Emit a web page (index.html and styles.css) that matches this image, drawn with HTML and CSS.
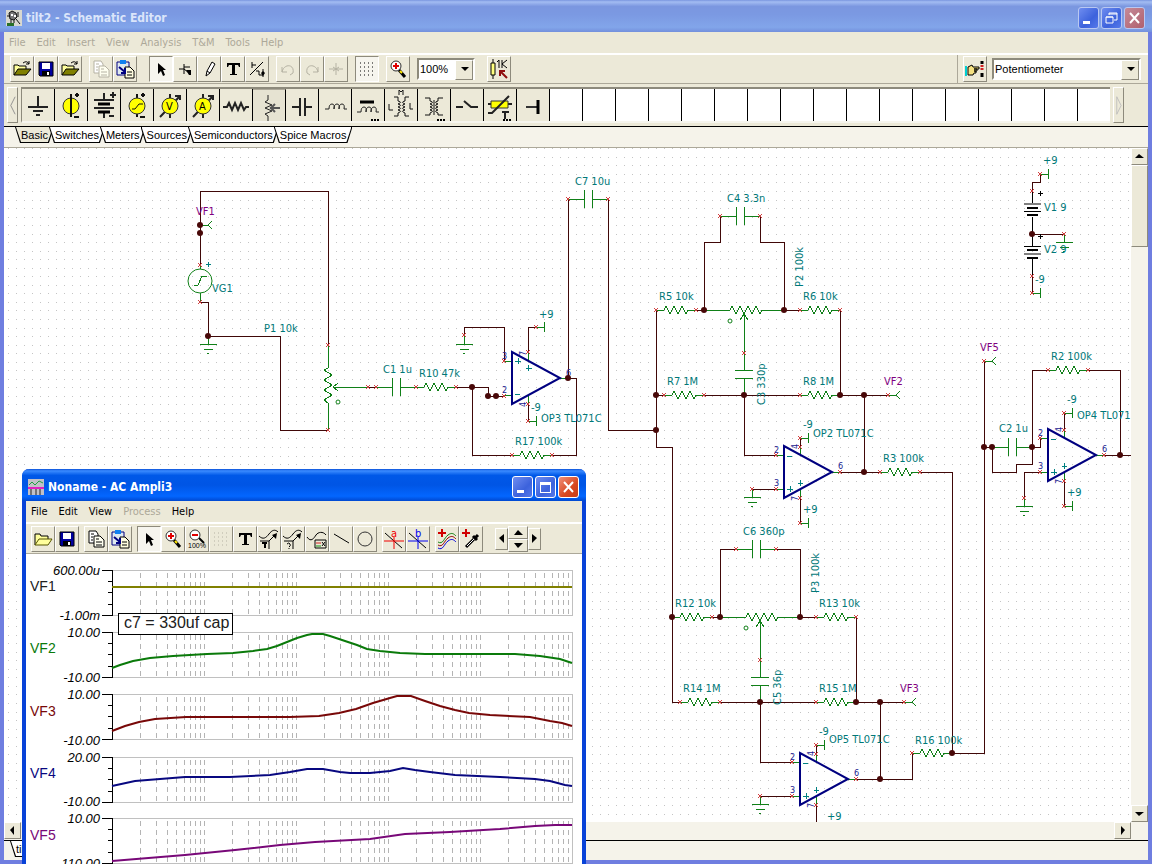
FILE: index.html
```
<!DOCTYPE html>
<html lang="en">
<head>
  <meta charset="UTF-8">
  <meta name="viewport" content="width=device-width, initial-scale=1.0">
  <title>tilt2 - Schematic Editor</title>
  <link rel="stylesheet" href="styles.css">
</head>
<body>
  <!-- shared icons and schematic symbols -->
  <svg class="defs" aria-hidden="true">
    <defs>
      <symbol id="i-open" viewBox="0 0 20 20">
        <path d="M2 16V6h4l1 1h7v3" fill="#ffff9c" stroke="#000"/>
        <path d="M2 16l4-6h13l-5 6z" fill="#808000" stroke="#000"/>
        <path d="M11 4q4-3 6 1m0-3v3h-3" fill="none" stroke="#000"/>
      </symbol>
      <symbol id="i-open-light" viewBox="0 0 20 20">
        <path d="M2 16V5h5l1 2h7v3" fill="#ffff9c" stroke="#000"/>
        <path d="M2 16l4-6h13l-4 6z" fill="#ffff9c" stroke="#555500"/>
      </symbol>
      <symbol id="i-save" viewBox="0 0 20 20">
        <path d="M3 3h14v14H4l-1-1z" fill="#0000a0" stroke="#000"/>
        <path d="M6 4h8v6H6z" fill="#fff"/>
        <path d="M6 12h8v5H6z" fill="#000"/><path d="M11 13h2v3h-2z" fill="#fff"/>
      </symbol>
      <symbol id="i-copy" viewBox="0 0 20 20">
        <path d="M3 2h7l2 3v9H3z" fill="#fff" stroke="currentColor"/>
        <path d="M8 7h6l4 4v7H8z" fill="#fffff0" stroke="currentColor"/>
        <path d="M5 5h3M5 8h2M5 11h2M10 10h3M10 13h6M10 16h6" stroke="currentColor"/>
      </symbol>
      <symbol id="i-paste" viewBox="0 0 20 20">
        <path d="M2 3h12v13H2z" fill="#dfe9f0" stroke="#000080"/>
        <path d="M5 1h6v4H5z" fill="#1080f0"/>
        <path d="M10 8h5l4 4v7h-9z" fill="#fffde0" stroke="#000"/>
        <path d="M12 13h5M12 16h5" stroke="#000"/>
        <path d="M4 8l6 5M10 9v5H6" fill="none" stroke="#000080" stroke-width="2"/>
      </symbol>
      <symbol id="i-cursor" viewBox="0 0 20 20"><path d="M7 4v11l3-3 2 5 2-1-2-5h3z"/></symbol>
      <symbol id="i-zoomin" viewBox="0 0 20 20">
        <path d="M11 11l6 7" stroke="#000" stroke-width="3"/><path d="M12 12l2 2" stroke="#ffe800" stroke-width="2"/>
        <circle cx="8" cy="7" r="5" fill="#fff" stroke="#303030"/><path d="M5 7h6M8 4v6" stroke="#e00000" stroke-width="2"/>
      </symbol>
      <symbol id="i-zoomout" viewBox="0 0 20 20">
        <path d="M11 8l6 6" stroke="#000" stroke-width="2"/>
        <circle cx="8" cy="6" r="5" fill="#fff" stroke="#303030"/><path d="M5 6h6" stroke="#e00000" stroke-width="2"/>
        <text class="tiny" x="1" y="19">100%</text>
      </symbol>
      <symbol id="i-grid" viewBox="0 0 20 20">
        <path d="M3 4h16M3 8h16M3 12h16M3 16h16" stroke="currentColor" stroke-dasharray="1 3"/>
      </symbol>
      <symbol id="i-text" viewBox="0 0 20 20">
        <path d="M4 4h13v4h-1l-1-2h-3v9h2v1H7v-1h2V6H6L5 8H4z"/>
      </symbol>
      <symbol id="i-curve" viewBox="0 0 20 20">
        <path d="M0 7c4 4 7 2 10-2s6-5 9-2M1 12h9v8" fill="none" stroke="#000"/>
        <path d="M10 12l6-6" stroke="#000"/><path d="M18 4l-1 6-4-4z"/>
      </symbol>

      <g id="resistor"><path d="M0 0h8l2-4 4 8 4-8 4 8 4-8 4 8 2-4h8"/></g>
      <g id="cap"><path d="M0 0h16M16-9v18M24-9v18M24 0h16"/></g>
      <g id="hpot"><path d="M0 0h26l2-4 4 8 4-8 4 8 4-8 4 8 4-8 4 8 2-4h22M40 5v38M36 10l4-6 4 6"/></g>
      <g id="ground"><path d="M0 0v8M-8 8H9M-4 13H5M-1 17h2"/></g>
      <g id="probe"><path d="M0 0h8M12-4l-4 4 4 4"/></g>
      <g id="rail"><path d="M0 0h8M8-5v10"/></g>
      <g id="opamp">
        <path class="part" d="M-8-17h8M-8 17h8M48 0h8M16-26v9M16 17v9"/>
        <path class="amp" d="M0-26v52L48 0z"/>
      </g>
      <!-- inverting input on top -->
      <g id="opamp-inv">
        <use href="#opamp"/>
        <path class="sign" d="M3-16h5M3 17h6M6 14v6M14 11h5M16 8v6"/>
        <text class="pin" x="-10" y="-19">2</text><text class="pin" x="-10" y="14">3</text>
        <text class="pin" x="54" y="-3">6</text>
        <text class="pin" transform="translate(14 -23) rotate(-90)">4</text>
        <text class="pin" transform="translate(14 29) rotate(-90)">7</text>
      </g>
      <marker id="m-pin" markerUnits="userSpaceOnUse" markerWidth="6" markerHeight="6" refX="3" refY="3">
        <path d="M1 1l4 4M5 1L1 5" stroke="#d04040"/>
      </marker>
      <marker id="m-node" markerUnits="userSpaceOnUse" markerWidth="8" markerHeight="8" refX="4" refY="4">
        <circle cx="4" cy="4" r="3" fill="#480808"/>
      </marker>
      <pattern id="dots" width="8" height="128" y="63" patternUnits="userSpaceOnUse">
        <path d="M0 0h1v1H0zM0 9h1v1H0zM0 17h1v1H0zM0 26h1v1H0zM0 34h1v1H0zM0 43h1v1H0zM0 51h1v1H0zM0 60h1v1H0zM0 68h1v1H0zM0 77h1v1H0zM0 85h1v1H0zM0 94h1v1H0zM0 102h1v1H0zM0 111h1v1H0zM0 119h1v1H0z" fill="#c4c4c4"/>
      </pattern>

      <path id="decade" d="M28 3v42M44 3v42M55 3v42M64 3v42M72 3v42M78 3v42M83 3v42M88 3v42M92 3v42"/>
      <g id="plot">
        <g class="log"><use href="#decade"/><use href="#decade" x="92"/><use href="#decade" x="184"/><use href="#decade" x="276"/><use href="#decade" x="368"/></g>
        <path class="plot-box" d="M0 0h460v45H0"/>
        <path class="axis" d="M-10 0H0v45h-10M-4 11h4M-4 22h4M-4 34h4"/>
      </g>
    </defs>
  </svg>

  <div class="window">
    <header class="titlebar">
      <svg class="app-icon" viewBox="0 0 16 16"><path d="M0 0h16v16H0z" fill="#d8d8d0"/><path d="M3 3l3-2 4 2 1 4-3 3-4-1zM10 9l4 5M5 10v3M8 10v3M12 2v5M1 6h3" stroke="#111" fill="#777"/><path d="M1 13h7v3H1z" fill="#287028"/><path d="M5 4h2v2H5zM8 5h2v2H8z" fill="#fff"/></svg>
      <h1>tilt2 - Schematic Editor</h1>
      <div class="caption">
        <button aria-label="Minimize"><svg viewBox="0 0 19 19"><path d="M4 12h7v3H4z" fill="#fff"/></svg></button>
        <button aria-label="Restore"><svg viewBox="0 0 19 19"><path d="M7 6V4h8v7h-3M4 8h7v6H4zM4 8h7M7 5h8" fill="none" stroke="#fff"/></svg></button>
        <button class="close" aria-label="Close"><svg viewBox="0 0 19 19"><path d="M5 4l9 10M14 4L5 14" stroke="#fff" stroke-width="2"/></svg></button>
      </div>
    </header>

    <nav class="menu inactive">
      <button>File</button><button>Edit</button><button>Insert</button><button>View</button><button>Analysis</button><button>T&amp;M</button><button>Tools</button><button>Help</button>
    </nav>

    <div class="toolbar">
      <div class="group">
        <button aria-label="Open"><svg><use href="#i-open"/></svg></button>
        <button aria-label="Save"><svg><use href="#i-save"/></svg></button>
        <button aria-label="Close file"><svg><use href="#i-open"/></svg></button>
      </div>
      <div class="group">
        <button aria-label="Copy" class="dim"><svg><use href="#i-copy"/></svg></button>
        <button aria-label="Paste"><svg><use href="#i-paste"/></svg></button>
      </div>
      <div class="group wide">
        <button aria-label="Select" class="pressed"><svg><use href="#i-cursor"/></svg></button>
        <button aria-label="Last component"><svg viewBox="0 0 20 20"><path d="M4 10h5M9 5v10M9 8h6M9 10l5 4" fill="none" stroke="#000"/><path d="M11 11h5v5h-2z"/></svg></button>
        <button aria-label="Wire"><svg viewBox="0 0 20 20"><path d="M8 12l5-9 3 2-5 9-4 3zM8 12l3 2" fill="#fff" stroke="#000"/></svg></button>
        <button aria-label="Text"><svg><use href="#i-text"/></svg></button>
        <button aria-label="Hide or reconnect"><svg viewBox="0 0 20 20"><path d="M5 3v6M5 6h4M3 16L16 3M9 12h3v4h4M16 10v8" fill="none" stroke="#000"/><path d="M16 12l2 2-2 3-2-3z"/></svg></button>
      </div>
      <div class="group">
        <button aria-label="Undo" class="dim"><svg viewBox="0 0 20 20"><path d="M4 8v5h5M4 13C6 4 17 5 15 14l-3 2" fill="none" stroke="currentColor"/></svg></button>
        <button aria-label="Redo" class="dim"><svg viewBox="0 0 20 20"><path d="M16 8v5h-5M16 13C14 4 3 5 5 14l3 2" fill="none" stroke="currentColor"/></svg></button>
        <button aria-label="Delete" class="dim"><svg viewBox="0 0 20 20"><path d="M3 10h14M10 4v12M7 8l6 4M13 8l-6 4" stroke="currentColor"/></svg></button>
      </div>
      <div class="group">
        <button aria-label="Grid" class="pressed"><svg><use href="#i-grid"/></svg></button>
      </div>
      <div class="group">
        <button aria-label="Zoom"><svg><use href="#i-zoomin"/></svg></button>
      </div>
      <div class="combo zoom"><select aria-label="Zoom level"><option>100%</option></select></div>
      <div class="group wide">
        <button aria-label="Edit value"><svg viewBox="0 0 20 20"><path d="M4 0v20" stroke="#000"/><path d="M2 4h4v12H2z" fill="#ffff80" stroke="#000"/><path d="M18 19l-6-6M11 17v-5h5" fill="none" stroke="#901010" stroke-width="2"/><path d="M8 3l2-2v8M13 1v8M18 1l-5 4 5 4" fill="none" stroke="#000"/></svg></button>
      </div>
      <div class="finder">
        <button aria-label="Find component"><svg viewBox="0 0 20 20"><path d="M1 7v10" stroke="#00d0d0" stroke-width="2"/><path d="M3 8l4-2 1 2h6v2H9h3v2H9h2v2H9l-1 2H3z" fill="#f4e080" stroke="#000"/><path d="M17 2v3M17 14v4" stroke="#000" stroke-width="3"/><path d="M17 6v6" stroke="#d02020" stroke-width="3" stroke-dasharray="2 1"/></svg></button>
        <div class="combo part-name"><select aria-label="Component"><option>Potentiometer</option></select></div>
      </div>
    </div>

    <div class="palette-row">
      <button class="scroll-cap" aria-label="Scroll left"><svg viewBox="0 0 8 24"><path d="M7 2L2 12l5 10" fill="none" stroke="#888"/></svg></button>
      <div class="palette">
        <button aria-label="Ground"><svg viewBox="0 0 28 32"><path d="M14 7v11M4 18h20M9 22h10M12 26h4" stroke="#222" stroke-width="2"/></svg></button>
        <button aria-label="Battery cell"><svg viewBox="0 0 28 32"><circle cx="14" cy="17" r="8" fill="#ff0" stroke="#333"/><path d="M14 5v23M18 6h4M20 4v4M17 28h5" stroke="#111" stroke-width="2"/></svg></button>
        <button aria-label="Battery"><svg viewBox="0 0 28 32"><path d="M14 4v6M4 11h20M4 19h20M14 24v5M20 6h6M23 3v6M19 27h5" stroke="#222" stroke-width="2"/><path d="M8 15h12M8 23h12" stroke="#000" stroke-width="3"/></svg></button>
        <button aria-label="Generator"><svg viewBox="0 0 28 32"><path d="M14 5v23M18 6h4M20 4v4M17 28h5" stroke="#111" stroke-width="2"/><circle cx="14" cy="17" r="8" fill="#ff0" stroke="#333"/><path d="M9 20h3l4-5h4" fill="none" stroke="#111"/></svg></button>
        <button aria-label="Voltmeter"><svg viewBox="0 0 28 32"><path d="M14 5v24M4 28L24 7M19 7h5v4" fill="none" stroke="#222" stroke-width="2"/><circle cx="14" cy="17" r="8" fill="#ff0" stroke="#333"/><text x="10" y="21" font-size="11">V</text></svg></button>
        <button aria-label="Ammeter"><svg viewBox="0 0 28 32"><path d="M14 5v24M4 28L24 7M19 7h5v4" fill="none" stroke="#222" stroke-width="2"/><circle cx="14" cy="17" r="8" fill="#ff0" stroke="#333"/><text x="10" y="21" font-size="11">A</text></svg></button>
        <button aria-label="Resistor"><svg viewBox="0 0 28 32"><path d="M1 18h4l2-4 3 7 3-7 3 7 3-7 3 7 2-3h3" fill="none" stroke="#222" stroke-width="2"/></svg></button>
        <button aria-label="Potentiometer" class="pressed"><svg viewBox="0 0 28 32"><path d="M13 5v5l-3 2 7 3-7 3 7 3-7 3 3 2v5" fill="none" stroke="#222"/><path d="M15 18h10M20 14l-4 4 4 4" fill="none" stroke="#555" stroke-width="2"/></svg></button>
        <button aria-label="Capacitor"><svg viewBox="0 0 28 32"><path d="M4 18h8M12 9v18M17 9v18M17 18h7" stroke="#222" stroke-width="2"/></svg></button>
        <button aria-label="Inductor"><svg viewBox="0 0 28 32"><path d="M4 20h4q0-5 3-5t2 5q0-5 3-5t2 5q0-5 3-5t2 5h3" fill="none" stroke="#222"/></svg></button>
        <button aria-label="Core inductor"><svg viewBox="0 0 28 32"><path d="M6 13h14" stroke="#000" stroke-width="3"/><path d="M3 23h4q0-5 3-5t2 5q0-5 3-5t2 5q0-5 3-5t2 5h3" fill="none" stroke="#222"/><path d="M17 31h8" stroke="#000" stroke-width="2" stroke-dasharray="2 1"/></svg></button>
        <button aria-label="Coupled inductors"><svg viewBox="0 0 28 32"><path d="M7 8h4v4q5 1 0 3 5 1 0 3 5 1 0 3 5 1 0 3v3H7M22 8h-4v4q-5 1 0 3-5 1 0 3-5 1 0 3-5 1 0 3v3h4M2 15v6h4M23 14v6h3M12 6V1l2 2 2-2v5" fill="none" stroke="#111"/></svg></button>
        <button aria-label="Transformer"><svg viewBox="0 0 28 32"><path d="M5 9h5v3q5 1 0 3 5 1 0 3 5 1 0 3 5 1 0 3v2H5M23 9h-5v3q-5 1 0 3-5 1 0 3-5 1 0 3-5 1 0 3v2h5M14 11v15" fill="none" stroke="#111"/><path d="M17 31h8" stroke="#000" stroke-width="2" stroke-dasharray="2 1"/></svg></button>
        <button aria-label="Switch"><svg viewBox="0 0 28 32"><path d="M3 18h7M11 12l7 6h7" fill="none" stroke="#222" stroke-width="2"/></svg></button>
        <button aria-label="Thermistor"><svg viewBox="0 0 28 32"><path d="M2 15h24" stroke="#222" stroke-width="2"/><path d="M5 12h17v7H5z" fill="#ff0" stroke="#333"/><path d="M2 24h4L23 7M16 23h7M19 23v7" fill="none" stroke="#222" stroke-width="2"/><path d="M17 31h8" stroke="#000" stroke-width="2" stroke-dasharray="2 1"/></svg></button>
        <button aria-label="Jumper"><svg viewBox="0 0 28 32"><path d="M7 18h12" stroke="#333" stroke-width="2"/><path d="M19 11v14" stroke="#000" stroke-width="3"/></svg></button>
        <i></i><i></i><i></i><i></i><i></i><i></i><i></i><i></i><i></i><i></i><i></i><i></i><i></i><i></i><i></i><i></i><i></i>
      </div>
      <button class="scroll-cap" aria-label="Scroll right"><svg viewBox="0 0 8 24"><path d="M2 2l5 10-5 10z" fill="none" stroke="#bbb"/></svg></button>
    </div>

    <div class="tabs">
      <button class="active">Basic</button><button>Switches</button><button>Meters</button><button>Sources</button><button>Semiconductors</button><button>Spice Macros</button>
    </div>

    <main class="sheet">
      <svg class="schematic" role="img" aria-label="Tilt circuit schematic">
        <g transform="translate(-4 -148)">
          <rect x="4" y="148" width="100%" height="100%" fill="url(#dots)"/>

          <path class="wire" d="M200 265V191H328V345M200 302H208V336H280V430H328M368 387H376M456 387H488V396H504M472 387V455H512M552 455H576V378H568M464 335V327H504V361M528 352V327H536M528 404V421M568 378V199M608 199V430H656
            M656 310V447H672V702H680M696 310H704M720 216V242H704V310M760 216V242H784V310H800M840 310V395M656 395H664M704 395H800M840 395H888M864 395V472M744 395V455H776M752 489H776M840 472H880M920 472H952V753M800 447V438M800 498V523
            M712 617H720M736 549H720V617M776 549H800V617H816M856 617V702M720 702H816M856 702H904M880 702V779M760 702V762H792M760 796H792M856 779H912V753M816 754V745M816 805V830M952 753H984V361
            M984 447H992V472H1016V464H1032V370H1048M1032 447H1040V438M1088 370H1120V455M1104 455H1140M1040 472H1024V498M1064 430V413M1064 481V506
            M1040 174V182H1032V191M1032 234H1064M1032 276V293"/>

          <g class="part">
            <circle class="round" cx="200" cy="281" r="12"/><path d="M200 265v4M200 293v9M194 285h4l4-9h5"/>
            <path d="M328 345v23l-4 2 8 5-8 5 8 5-8 5 8 5-8 5 4 3v28M333 387h35M338 383l-5 4 5 4"/>
            <use href="#resistor" x="416" y="387"/><use href="#resistor" x="512" y="455"/>
            <use href="#resistor" x="656" y="310"/><use href="#resistor" x="800" y="310"/>
            <use href="#resistor" x="664" y="395"/><use href="#resistor" x="800" y="395"/>
            <use href="#resistor" x="880" y="472"/><use href="#resistor" x="672" y="617"/>
            <use href="#resistor" x="816" y="617"/><use href="#resistor" x="680" y="702"/>
            <use href="#resistor" x="816" y="702"/><use href="#resistor" x="912" y="753"/>
            <use href="#resistor" x="1048" y="370"/>
            <use href="#cap" x="376" y="387"/><use href="#cap" x="568" y="199"/><use href="#cap" x="720" y="216"/>
            <use href="#cap" x="736" y="549"/><use href="#cap" x="992" y="447"/>
            <use href="#cap" transform="translate(744 354) rotate(90)"/><use href="#cap" transform="translate(760 661) rotate(90)"/>
            <use href="#hpot" x="704" y="310"/><use href="#hpot" x="720" y="617"/>
            <use href="#ground" x="208" y="336"/><use href="#ground" x="464" y="336"/><use href="#ground" x="752" y="489"/>
            <use href="#ground" x="760" y="796"/><use href="#ground" x="1024" y="498"/><use href="#ground" x="1064" y="234"/>
            <use href="#probe" x="200" y="225"/><use href="#probe" x="888" y="395"/><use href="#probe" x="904" y="702"/><use href="#probe" x="984" y="361"/>
            <use href="#rail" x="536" y="327"/><use href="#rail" x="528" y="421"/><use href="#rail" x="800" y="438"/><use href="#rail" x="800" y="523"/>
            <use href="#rail" x="816" y="745"/><use href="#rail" x="1064" y="413"/><use href="#rail" x="1064" y="506"/>
            <use href="#rail" x="1040" y="174"/><use href="#rail" x="1032" y="293"/>
            <circle class="round" cx="338" cy="402" r="2"/><circle class="round" cx="730" cy="321" r="2"/><circle class="round" cx="746" cy="628" r="2"/>
          </g>

          <!-- batteries -->
          <path class="cell" d="M1032 191v13M1024 211h17M1032 217v17M1038 193h5M1040 191v5M1032 234v12M1024 246h17M1032 259v17M1038 236h5M1040 234v5"/>
          <path class="cell soft" d="M1024 204h17M1024 254h17"/>
          <path class="cell thick" d="M1027 208h11M1027 215h11M1027 250h11M1027 258h11"/>

          <!-- op amps -->
          <use href="#opamp" x="512" y="378"/>
          <path class="sign" d="M515 361h6M518 358v6M526 368h6M528 365v6M515 394h5M206 264h5M208 262v5"/>
          <text class="pin" x="502" y="359">3</text><text class="pin" x="502" y="393">2</text><text class="pin" x="566" y="376">6</text>
          <text class="pin" transform="translate(526 356) rotate(-90)">7</text><text class="pin" transform="translate(526 407) rotate(-90)">4</text>
          <use href="#opamp-inv" x="784" y="472"/>
          <use href="#opamp-inv" x="800" y="779"/>
          <use href="#opamp-inv" x="1048" y="455"/>

          <polyline class="pins" points="200,265 200,302 328,345 328,430 368,387 376,387 416,387 456,387 504,396 504,361 512,455 552,455 464,335 528,352 528,404 528,421 536,327 568,199 608,199
            656,310 696,310 720,216 760,216 800,310 840,310 664,395 704,395 744,353 800,395 888,395 776,455 776,489 752,489 840,472 800,447 800,438 800,498 800,523 880,472 920,472
            736,549 776,549 712,617 816,617 856,617 680,702 720,702 760,660 816,702 904,702 792,762 792,796 760,796 856,779 816,754 816,745 816,805 912,753
            984,361 1048,370 1088,370 1040,438 1040,472 1024,498 1064,430 1064,413 1064,481 1064,506 1104,455 1040,174 1032,191 1064,234 1032,276 1032,293"/>
          <polyline class="nodes" points="200,225 200,233 208,336 472,387 488,396 496,396 568,378 656,395 656,430 704,310 784,310 744,395 840,395 864,395 864,472 672,617 720,617 800,617 760,702 856,702 880,702 880,779 952,753 984,447 992,447 1032,447 1120,455 1032,234"/>

          <g class="label">
            <text x="212" y="292">VG1</text><text x="264" y="332">P1 10k</text><text x="383" y="373">C1 1u</text>
            <text x="419" y="377">R10 47k</text><text x="575" y="185">C7 10u</text><text x="539" y="318">+9</text>
            <text x="531" y="411">-9</text><text x="541" y="422">OP3 TL071C</text><text x="515" y="445">R17 100k</text>
            <text x="727" y="202">C4 3.3n</text><text x="659" y="300">R5 10k</text><text x="803" y="300">R6 10k</text>
            <text x="667" y="385">R7 1M</text><text x="803" y="385">R8 1M</text><text x="803" y="428">-9</text>
            <text x="813" y="437">OP2 TL071C</text><text x="883" y="462">R3 100k</text><text x="803" y="513">+9</text>
            <text x="743" y="535">C6 360p</text><text x="675" y="607">R12 10k</text><text x="819" y="607">R13 10k</text>
            <text x="683" y="692">R14 1M</text><text x="819" y="692">R15 1M</text><text x="819" y="735">-9</text>
            <text x="829" y="743">OP5 TL071C</text><text x="915" y="744">R16 100k</text><text x="827" y="820">+9</text>
            <text x="1043" y="164">+9</text><text x="1044" y="211">V1 9</text><text x="1044" y="253">V2 9</text><text x="1035" y="283">-9</text>
            <text x="1051" y="360">R2 100k</text><text x="999" y="432">C2 1u</text><text x="1067" y="403">-9</text>
            <text x="1077" y="419">OP4 TL071</text><text x="1067" y="496">+9</text>
            <text transform="translate(803 287) rotate(-90)">P2 100k</text>
            <text transform="translate(765 405) rotate(-90)">C3 330p</text>
            <text transform="translate(819 593) rotate(-90)">P3 100k</text>
            <text transform="translate(781 705) rotate(-90)">C5 36p</text>
          </g>
          <g class="label output">
            <text x="196" y="215">VF1</text><text x="884" y="385">VF2</text><text x="900" y="692">VF3</text><text x="980" y="351">VF5</text>
          </g>
        </g>
      </svg>
      <div class="vscroll">
        <button class="arrow" aria-label="Scroll up"><svg viewBox="0 0 9 9"><path d="M0 6h9L4 2z"/></svg></button>
        <div class="thumb"></div>
        <button class="arrow last" aria-label="Scroll down"><svg viewBox="0 0 9 9"><path d="M0 3h9L4 7z"/></svg></button>
      </div>
      <div class="hscroll">
        <button class="arrow" aria-label="Scroll sheet left"><svg viewBox="0 0 9 9"><path d="M6 0v9L2 4z"/></svg></button>
        <button class="arrow last" aria-label="Scroll sheet right"><svg viewBox="0 0 9 9"><path d="M3 0v9l4-5z"/></svg></button>
      </div>
    </main>
    <div class="tabs sheets"><button>tilt2</button></div>
  </div>

  <section class="window popup">
    <header class="titlebar">
      <svg class="app-icon" viewBox="0 0 16 16"><path d="M0 0h16v16H0z" fill="#c0c0c8"/><path d="M1 6l3-3 3 3 4-4 4 2" fill="none" stroke="#20a040"/><path d="M0 9h16" stroke="#e020c0" stroke-width="2"/><path d="M3 10v6M8 10v6M12 10v6" stroke="#222"/></svg>
      <h1>Noname - AC Ampli3</h1>
      <div class="caption">
        <button aria-label="Minimize"><svg viewBox="0 0 19 19"><path d="M4 12h7v3H4z" fill="#fff"/></svg></button>
        <button aria-label="Maximize"><svg viewBox="0 0 19 19"><path d="M4 4h11v11H4zM5 7h9v7H5z" fill="#fff" fill-rule="evenodd"/></svg></button>
        <button class="close" aria-label="Close"><svg viewBox="0 0 19 19"><path d="M5 4l9 10M14 4L5 14" stroke="#fff" stroke-width="2"/></svg></button>
      </div>
    </header>
    <nav class="menu">
      <button>File</button><button>Edit</button><button>View</button><button disabled>Process</button><button>Help</button>
    </nav>
    <div class="toolbar">
      <div class="group">
        <button aria-label="Open"><svg><use href="#i-open-light"/></svg></button>
        <button aria-label="Save"><svg><use href="#i-save"/></svg></button>
      </div>
      <div class="group">
        <button aria-label="Copy"><svg><use href="#i-copy"/></svg></button>
        <button aria-label="Paste"><svg><use href="#i-paste"/></svg></button>
      </div>
      <div class="group">
        <button aria-label="Select" class="pressed"><svg><use href="#i-cursor"/></svg></button>
        <button aria-label="Zoom in"><svg><use href="#i-zoomin"/></svg></button>
        <button aria-label="Zoom 100%"><svg><use href="#i-zoomout"/></svg></button>
        <button aria-label="Grid" class="dim"><svg><use href="#i-grid"/></svg></button>
        <button aria-label="Text"><svg><use href="#i-text"/></svg></button>
        <button aria-label="Curve text"><svg viewBox="0 0 20 20"><use href="#i-curve"/><path d="M3 14h5M6 14v5" stroke="#000" stroke-width="2"/></svg></button>
        <button aria-label="Curve info"><svg viewBox="0 0 20 20"><use href="#i-curve"/><path d="M4 15q2-2 3 0t-1 3M6 19v1" fill="none" stroke="#000"/></svg></button>
        <button aria-label="Legend"><svg viewBox="0 0 20 20"><path d="M0 8c4 6 7 1 9-2s7-4 10 0M8 11h11v8H8z" fill="none" stroke="#000"/><path d="M9 14h5" stroke="#d02020"/><path d="M9 17h5" stroke="#109010"/><path d="M15 13l3 4M18 13l-3 4" stroke="#000"/></svg></button>
        <button aria-label="Line"><svg viewBox="0 0 20 20"><path d="M3 5l15 9" stroke="#000"/></svg></button>
        <button aria-label="Ellipse"><svg viewBox="0 0 20 20"><circle cx="10" cy="10" r="7" fill="none" stroke="#333"/></svg></button>
      </div>
      <div class="group">
        <button aria-label="Cursor a"><svg viewBox="0 0 20 20"><path d="M1 4l9 8 8 7" fill="none" stroke="#000"/><path d="M0 12h20M10 8v12" stroke="#f00000"/><text class="cur-a" x="7" y="8">a</text></svg></button>
        <button aria-label="Cursor b"><svg viewBox="0 0 20 20"><path d="M1 4l9 8 8 7" fill="none" stroke="#000"/><path d="M0 12h20M10 8v12" stroke="#0000f0"/><text class="cur-b" x="7" y="8">b</text></svg></button>
      </div>
      <div class="group">
        <button aria-label="Add curves"><svg viewBox="0 0 20 20"><path d="M1 4h8M5 0v8" stroke="#d00000" stroke-width="2"/><path d="M1 13c5 3 6-4 10-7s6-1 8 1" fill="none" stroke="#108010"/><path d="M1 16c5 3 6-4 10-7s6-1 8 1" fill="none" stroke="#900000"/><path d="M1 19c5 3 6-4 10-7s6-1 8 1" fill="none" stroke="#0000e0"/></svg></button>
        <button aria-label="Pick curve"><svg viewBox="0 0 20 20"><path d="M1 4h8M5 0v8" stroke="#d00000" stroke-width="2"/><path d="M5 18l8-8" stroke="#000" stroke-width="3"/><path d="M6 17l7-7" stroke="#fff"/><path d="M12 7l4 4M14 9l3-3" stroke="#000" stroke-width="3"/></svg></button>
      </div>
      <div class="stepper">
        <button aria-label="Previous"><svg viewBox="0 0 9 9"><path d="M7 0v9L2 4z"/></svg></button>
        <div class="updown">
          <button aria-label="Up"><svg viewBox="0 0 9 9"><path d="M0 7h9L4 2z"/></svg></button>
          <button aria-label="Down"><svg viewBox="0 0 9 9"><path d="M0 2h9L4 7z"/></svg></button>
        </div>
        <button aria-label="Next"><svg viewBox="0 0 9 9"><path d="M2 0v9l5-5z"/></svg></button>
      </div>
    </div>
    <div class="plots">
      <svg role="img" aria-label="AC transfer curves VF1 to VF5">
        <g transform="translate(-26 -554)">
          <use href="#plot" x="112" y="570"/><use href="#plot" x="112" y="632"/><use href="#plot" x="112" y="694"/>
          <use href="#plot" x="112" y="757"/><use href="#plot" x="112" y="818"/>
          <g class="scale">
            <text x="100" y="575">600.00u</text><text x="100" y="620">-1.00m</text>
            <text x="100" y="637">10.00</text><text x="100" y="682">-10.00</text>
            <text x="100" y="699">10.00</text><text x="100" y="745">-10.00</text>
            <text x="100" y="762">20.00</text><text x="100" y="806">-10.00</text>
            <text x="100" y="823">10.00</text><text x="100" y="868">-110.00</text>
          </g>
          <g class="trace vf1"><path d="M112 587H572"/><text x="30" y="591">VF1</text></g>
          <g class="trace vf2"><path d="M112 668L120 665 133 661 150 658 173 656 207 654 233 653 253 651 267 649 277 646 287 642 297 638 307 635 312 634 323 634 330 636 345 641 357 645 367 649 380 651 400 653 425 654 515 654 540 656 560 659 572 663"/><text x="30" y="653">VF2</text></g>
          <g class="trace vf3"><path d="M112 731L125 726 139 722 155 719 186 717 290 717 319 716 339 713 356 709 373 703 390 698 397 696 411 696 425 701 440 706 455 710 469 713 490 715 530 717 550 721 562 723 572 726"/><text x="30" y="716">VF3</text></g>
          <g class="trace vf4"><path d="M112 786L135 781 160 779 185 777 230 777 270 775 290 772 307 769 323 769 340 772 350 773 370 773 390 771 403 768 415 770 430 772 455 775 500 777 535 779 550 781 565 785 572 786"/><text x="30" y="778">VF4</text></g>
          <g class="trace vf5"><path d="M112 861L185 855 235 850 280 845 315 842 370 839 405 834 450 832 500 829 535 826 555 825 572 825"/><text x="30" y="840">VF5</text></g>
          <rect class="note-box" x="118" y="613" width="114" height="21"/>
          <text class="note" x="124" y="628">c7 = 330uf cap</text>
        </g>
      </svg>
    </div>
  </section>
</body>
</html>
```

FILE: styles.css
```
* {
  box-sizing: border-box;
}
body {
  position: relative;
  margin: 0;
  height: 100vh;
  overflow: hidden;
  font-family: "DejaVu Sans Condensed", "DejaVu Sans", sans-serif;
  font-size: 11px;
  color: #000;
}
button {
  margin: 0;
  padding: 0;
  border: 0;
  background: none;
  font: inherit;
  color: inherit;
}
svg {
  display: block;
}
.defs {
  position: absolute;
  width: 0;
  height: 0;
}

/* window frame */
.window {
  display: flex;
  flex-direction: column;
  height: 100vh;
  background: #ece9d8;
  border: 4px solid #6f7ee0;
  border-top: 0;
}
.titlebar {
  display: flex;
  flex: none;
  align-items: center;
  gap: 4px;
  height: 32px;
  margin: 0 -4px;
  padding: 4px 7px 0 6px;
  background: linear-gradient(#7a96df 0, #a3bcf2 6%, #7b97e0 20%, #7b99e2 45%, #82a5ea 85%, #7390dc 100%);
}
.titlebar h1 {
  flex: 1;
  margin: 0;
  font-size: 12px;
  font-weight: bold;
  color: #dbe5fa;
}
.app-icon {
  width: 16px;
  height: 16px;
}
.caption {
  display: flex;
  gap: 2px;
}
.caption button {
  width: 21px;
  height: 22px;
  border: 1px solid #b9c8f2;
  border-radius: 3px;
  background: linear-gradient(135deg, #6f8df0, #3c62dc 60%, #5579ea);
}
.caption .close {
  background: linear-gradient(135deg, #c58a98, #b0606e);
}

.menu {
  display: flex;
  flex: none;
  gap: 11px;
  height: 21px;
  padding: 0 5px;
}
.inactive,
.menu button:disabled {
  color: #aca899;
}

/* toolbars */
.toolbar {
  display: flex;
  flex: none;
  align-items: center;
  gap: 7px;
  height: 31px;
  padding: 0 5px 0 6px;
  border-top: 2px solid #fff;
  border-bottom: 1px solid #aca899;
}
.group {
  display: flex;
}
.group.wide {
  margin-left: 5px;
}
.group button,
.finder button {
  width: 24px;
  height: 26px;
  padding: 1px;
  border: 1px solid;
  border-color: #fff #8d8a7c #8d8a7c #fff;
}
.group button svg,
.finder button svg {
  width: 20px;
  height: 20px;
  overflow: visible;
}
.group .pressed {
  border-color: #8d8a7c #fff #fff #8d8a7c;
  background: #f6f5ee;
}
.dim {
  color: #b5b2a3;
}
.tiny {
  font: 7px "Liberation Sans", sans-serif;
}
.combo {
  position: relative;
  height: 22px;
  border: 2px solid;
  border-color: #8d8a7c #fff #fff #8d8a7c;
  background: #fff;
}
.combo select {
  display: block;
  width: 100%;
  height: 18px;
  padding: 0 1px;
  border: 0;
  appearance: none;
  background: #fff;
  font: 11px "Liberation Sans", sans-serif;
  color: #000;
}
.combo::before {
  content: "";
  position: absolute;
  top: 0;
  right: 0;
  width: 16px;
  height: 18px;
  border: 1px solid;
  border-color: #fff #8d8a7c #8d8a7c #fff;
  background: #ece9d8;
  pointer-events: none;
}
.combo::after {
  content: "";
  position: absolute;
  top: 7px;
  right: 4px;
  border: 4px solid transparent;
  border-top-color: #000;
  border-bottom: 0;
  pointer-events: none;
}
.zoom {
  width: 58px;
}
.part-name {
  width: 149px;
}
.finder {
  display: flex;
  align-items: center;
  gap: 5px;
  height: 100%;
  margin-left: auto;
  padding: 0 2px 0 5px;
  border-left: 1px solid #aca899;
}

/* component palette */
.palette-row {
  display: flex;
  flex: none;
  gap: 3px;
  height: 42px;
  padding: 3px 24px 3px 3px;
}
.scroll-cap {
  width: 11px;
  padding: 0 1px;
  border: 1px solid;
  border-color: #fff #8d8a7c #8d8a7c #fff;
}
.palette {
  display: flex;
  flex: 1;
  border-top: 2px solid #8d8a7c;
  border-bottom: 2px solid #f6f5ee;
  border-left: 1px solid #8d8a7c;
  background: #fff;
}
.palette > * {
  display: flex;
  flex: 1;
  min-width: 0;
  align-items: center;
  justify-content: center;
  border-right: 1px solid #000;
}
.palette > i:last-child {
  border-right: 0;
}
.palette button {
  background: #ece9d8;
}
.palette button.pressed {
  background: #e6e3d2;
  border-top: 1px solid #aca899;
}
.palette svg {
  width: 28px;
  height: 32px;
}

.tabs {
  display: flex;
  flex: none;
  align-items: flex-start;
  height: 22px;
  padding-left: 11px;
  border-top: 1px solid #000;
  border-bottom: 1px solid #aca899;
  background: #f5f3ea;
  font-family: "Liberation Sans", sans-serif;
  font-size: 11px;
}
.tabs button {
  position: relative;
  z-index: 0;
  height: 16px;
  margin-right: -5px;
  padding: 0 6px 1px;
  background: #000;
  clip-path: polygon(0 0, 100% 0, calc(100% - 5px) 100%, 5px 100%);
}
.tabs button::before {
  content: "";
  position: absolute;
  z-index: -1;
  inset: 0 1px 1px;
  background: #fff;
  clip-path: polygon(0 0, 100% 0, calc(100% - 5px) 100%, 5px 100%);
}
.tabs .active::before {
  background: #ece9d8;
}
.tabs.sheets {
  height: 20px;
  padding-left: 6px;
  border-bottom: 0;
}

/* drawing sheet */
.sheet {
  display: grid;
  flex: 1;
  grid-template: minmax(0, 1fr) 18px / minmax(0, 1fr) 17px;
  min-height: 0;
  background: #f5f3ea;
}
.schematic {
  width: 100%;
  height: 100%;
  background: #fff;
  overflow: hidden;
}
.vscroll,
.hscroll {
  display: flex;
}
.vscroll {
  flex-direction: column;
}
.arrow,
.thumb {
  border: 1px solid;
  border-color: #fff #8d8a7c #8d8a7c #fff;
  background: #ece9d8;
}
.arrow {
  display: grid;
  place-items: center;
  width: 17px;
  height: 17px;
}
.arrow svg {
  width: 9px;
  height: 9px;
}
.thumb {
  height: 82px;
}
.vscroll .last {
  margin-top: auto;
}
.hscroll .last {
  margin-left: auto;
}

.wire,
.part,
.amp,
.sign,
.cell {
  fill: none;
}
.wire {
  stroke: #400808;
  shape-rendering: crispEdges;
}
.part {
  stroke: #108018;
  shape-rendering: crispEdges;
}
.round {
  shape-rendering: auto;
}
.amp {
  stroke: #000080;
  stroke-width: 2;
}
.sign {
  stroke: #008080;
  shape-rendering: crispEdges;
}
.cell {
  stroke: #000;
  shape-rendering: crispEdges;
}
.cell.soft {
  stroke: #808080;
  stroke-width: 2;
}
.cell.thick {
  stroke-width: 2;
}
.pins {
  fill: none;
  marker: url(#m-pin);
}
.nodes {
  fill: none;
  marker: url(#m-node);
}
.label {
  fill: #007878;
}
.label.output {
  fill: #800080;
}
.pin {
  fill: #202090;
  font-size: 9px;
}

/* analysis window */
.popup {
  position: absolute;
  top: 469px;
  bottom: 0;
  left: 22px;
  width: 564px;
  height: auto;
  border-color: #0842d8;
  border-bottom: 0;
  border-radius: 7px 7px 0 0;
}
.popup .titlebar {
  border-radius: 7px 7px 0 0;
  background: linear-gradient(#0a50d8 0, #3b8bff 6%, #0058e8 20%, #0055e5 50%, #0366ff 85%, #0048d0 100%);
}
.popup .titlebar h1 {
  color: #fff;
}
.popup .caption button {
  border-color: #fff;
}
.popup .caption .close {
  background: linear-gradient(135deg, #f0907a, #d84820 60%, #c83c18);
}
.popup .toolbar {
  gap: 5px;
  height: 32px;
  padding: 0 5px;
}
.cur-a {
  fill: #f00000;
  font-size: 11px;
}
.cur-b {
  fill: #0000f0;
  font-size: 11px;
}
.stepper {
  display: flex;
  align-items: center;
  margin-left: 7px;
}
.stepper button {
  display: grid;
  place-items: center;
  width: 13px;
  height: 22px;
  border: 1px solid;
  border-color: #fff #8d8a7c #8d8a7c #fff;
}
.stepper .updown button {
  width: 20px;
  height: 13px;
}
.stepper svg {
  width: 9px;
  height: 9px;
}
.plots {
  flex: 1;
  min-height: 0;
  background: #fff;
  font-family: "Liberation Sans", sans-serif;
}
.plots svg {
  width: 100%;
  height: 100%;
}
.log {
  fill: none;
  stroke: #b4b4b4;
  stroke-dasharray: 5 4;
  shape-rendering: crispEdges;
}
.plot-box {
  fill: none;
  stroke: #c0c0c0;
  shape-rendering: crispEdges;
}
.axis {
  fill: none;
  stroke: #000;
  shape-rendering: crispEdges;
}
.scale {
  font-size: 13px;
  font-style: italic;
  text-anchor: end;
}
.trace {
  font-size: 14px;
}
.trace path {
  fill: none;
  stroke-width: 2;
}
.vf1 path {
  stroke: #808000;
}
.vf1 text {
  fill: #202020;
}
.vf2 path {
  stroke: #0a7a0a;
}
.vf2 text {
  fill: #0a7a0a;
}
.vf3 path {
  stroke: #780808;
}
.vf3 text {
  fill: #780808;
}
.vf4 path {
  stroke: #080880;
}
.vf4 text {
  fill: #080880;
}
.vf5 path {
  stroke: #780878;
}
.vf5 text {
  fill: #780878;
}
.note-box {
  fill: #fff;
  stroke: #000;
  shape-rendering: crispEdges;
}
.note {
  font-size: 16px;
  fill: #202020;
}
```
